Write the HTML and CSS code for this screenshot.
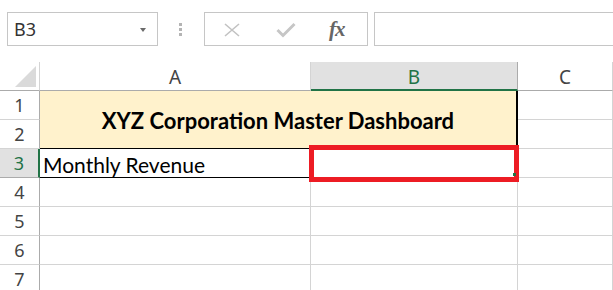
FILE: index.html
```html
<!DOCTYPE html>
<html lang="en">
<head>
    <meta charset="UTF-8">
    <meta name="viewport" content="width=device-width, initial-scale=1.0">
    <title>XYZ Corporation Master Dashboard</title>
    <link rel="stylesheet" href="styles.css">
</head>
<body>
    <div class="toolbar">
        <div class="namebox">
            <span>B3</span>
            <span class="caret"></span>
        </div>
        <div class="grip"><i></i><i></i><i></i></div>
        <div class="fbuttons">
            <svg class="icon-x" width="18" height="14" viewBox="0 0 18 14">
                <path d="M2 1 L16 13 M16 1 L2 13" stroke="#c2c2c2" stroke-width="1.6" fill="none"/>
            </svg>
            <svg class="icon-ok" width="20" height="16" viewBox="0 0 20 16">
                <path d="M1.5 8 L7 13.5 L18.5 2" stroke="#c6c6c6" stroke-width="3" fill="none"/>
            </svg>
            <span class="fx">fx</span>
        </div>
        <div class="finput"></div>
    </div>

    <div class="sheet">
        <div class="corner"><span class="tri"></span></div>
        <div class="colhead">A</div>
        <div class="colhead sel">B</div>
        <div class="colhead">C</div>

        <div class="rowhead">1</div>
        <div class="cell title">XYZ Corporation Master Dashboard</div>
        <div class="cell"></div>

        <div class="rowhead">2</div>
        <div class="cell"></div>

        <div class="rowhead sel">3</div>
        <div class="cell label">Monthly Revenue</div>
        <div class="cell active">
            <span class="mark"></span>
            <span class="handle"></span>
        </div>
        <div class="cell"></div>

        <div class="rowhead">4</div>
        <div class="cell"></div><div class="cell"></div><div class="cell"></div>

        <div class="rowhead">5</div>
        <div class="cell"></div><div class="cell"></div><div class="cell"></div>

        <div class="rowhead">6</div>
        <div class="cell"></div><div class="cell"></div><div class="cell"></div>

        <div class="rowhead">7</div>
        <div class="cell"></div><div class="cell"></div><div class="cell"></div>
    </div>
</body>
</html>
```

FILE: styles.css
```css
body {
    margin: 0;
    width: 613px;
    height: 290px;
    overflow: hidden;
    background-color: #fff;
    font-family: 'Noto Sans', 'Open Sans', sans-serif;
    color: #444;
}
.toolbar {
    display: flex;
    align-items: center;
    height: 34px;
    padding-top: 12px;
    margin-bottom: 16px;
}
.namebox {
    box-sizing: border-box;
    display: flex;
    align-items: center;
    justify-content: space-between;
    width: 151px;
    height: 34px;
    margin-left: 7px;
    padding: 0 11px 0 6px;
    border: 1px solid #c6c6c6;
    font-size: 18px;
    color: #333;
}
.caret {
    width: 0;
    height: 0;
    border-left: 3.5px solid transparent;
    border-right: 3.5px solid transparent;
    border-top: 4px solid #6a6a6a;
    margin-top: 2px;
}
.grip {
    display: flex;
    flex-direction: column;
    gap: 2px;
    margin: 0 22px 0 21px;
}
.grip i {
    display: block;
    width: 3px;
    height: 3px;
    background-color: #b4b4b4;
}
.fbuttons {
    box-sizing: border-box;
    display: flex;
    align-items: center;
    width: 164px;
    height: 34px;
    padding-left: 18px;
    border: 1px solid #c6c6c6;
}
.icon-x {
    margin-top: 2px;
}
.icon-ok {
    margin-left: 35px;
    margin-top: 2px;
}
.fx {
    margin-left: 33px;
    font-family: 'Liberation Serif', serif;
    font-style: italic;
    font-weight: bold;
    font-size: 21px;
    color: #666;
    letter-spacing: -1px;
}
.finput {
    box-sizing: border-box;
    flex: 1;
    height: 34px;
    margin-left: 6px;
    margin-right: -2px;
    border: 1px solid #c6c6c6;
}
.sheet {
    display: grid;
    grid-template-columns: 40px 271px 207px 95px;
    grid-auto-rows: 29px;
}
.sheet > div {
    box-sizing: border-box;
}
.corner {
    display: flex;
    justify-content: flex-end;
    align-items: flex-end;
    padding: 0 3px 3px 0;
    border-right: 1px solid #d4d4d4;
    border-bottom: 1px solid #ababab;
}
.tri {
    width: 0;
    height: 0;
    border-left: 21px solid transparent;
    border-bottom: 21px solid #dadada;
}
.colhead {
    display: flex;
    justify-content: center;
    align-items: center;
    padding-top: 2px;
    font-size: 19px;
    border-right: 1px solid #d4d4d4;
    border-bottom: 1px solid #ababab;
}
.colhead.sel {
    background-color: #e1e1e1;
    color: #217346;
    border-right-color: #ababab;
    border-bottom: 2px solid #217346;
}
.rowhead {
    display: flex;
    justify-content: center;
    align-items: center;
    font-size: 18px;
    border-right: 1px solid #ababab;
    border-bottom: 1px solid #d4d4d4;
}
.rowhead.sel {
    background-color: #e1e1e1;
    color: #217346;
    border-right: 2px solid #217346;
    border-bottom-color: #ababab;
}
.cell {
    border-right: 1px solid #d4d4d4;
    border-bottom: 1px solid #d4d4d4;
    font-family: Lato, 'Liberation Sans', sans-serif;
    font-size: 21px;
    color: #000;
}
.title {
    grid-column: 2 / 4;
    grid-row: 2 / 4;
    display: flex;
    justify-content: center;
    align-items: center;
    padding-top: 2px;
    background-color: #fff2cc;
    font-size: 22px;
    font-weight: bold;
    border-right: 2px solid #000;
    border-bottom: 1px solid #000;
}
.label {
    display: flex;
    align-items: center;
    padding: 2px 0 0 3px;
    border-bottom-color: #000;
}
.active {
    position: relative;
}
.mark {
    position: absolute;
    left: -2px;
    top: -4px;
    width: 210px;
    height: 37px;
    box-sizing: border-box;
    border: 5px solid #ed1c24;
}
.handle {
    position: absolute;
    left: 202px;
    top: 24px;
    width: 3px;
    height: 3px;
    background-color: #217346;
}
```
